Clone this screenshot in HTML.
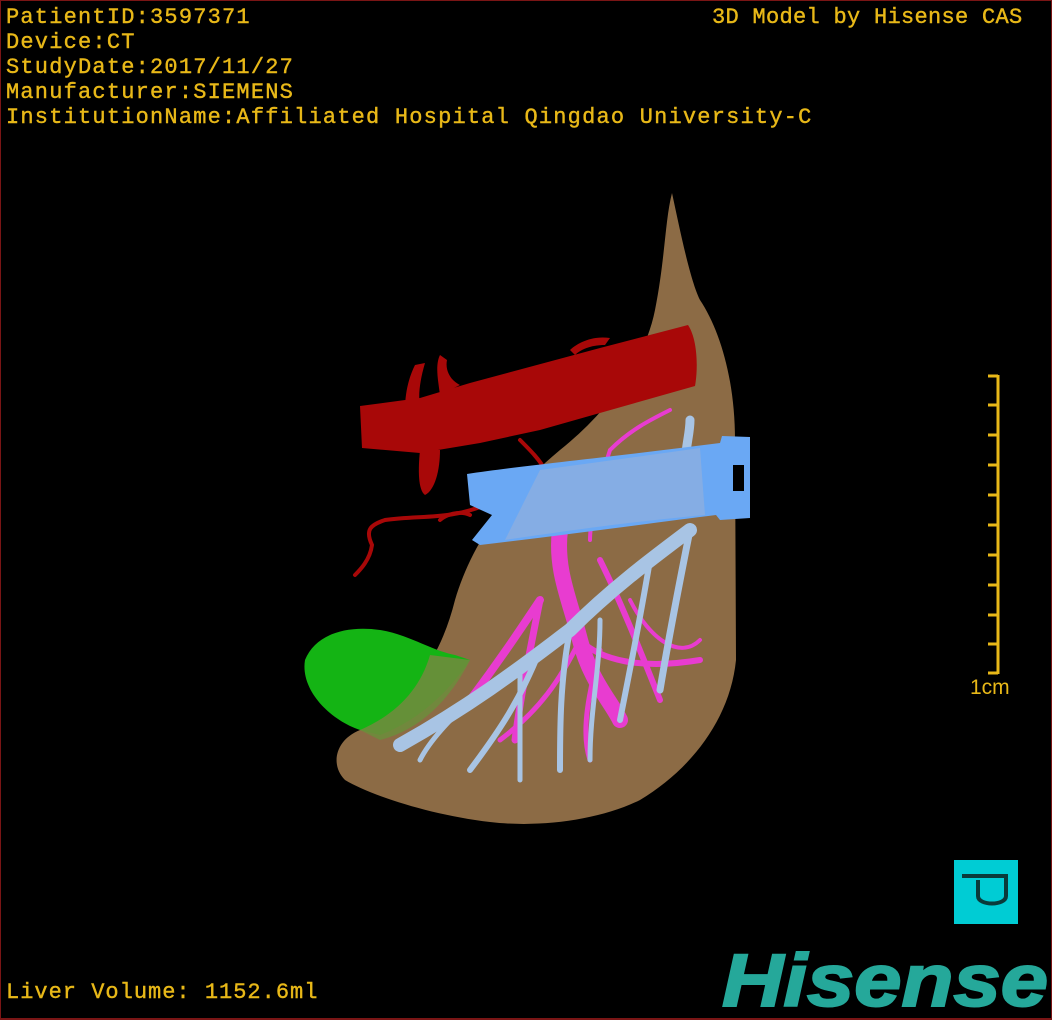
<!DOCTYPE html>
<html><head><meta charset="utf-8"><style>
html,body{margin:0;padding:0;background:#000;}
#f{position:relative;width:1052px;height:1020px;overflow:hidden;background:#000;box-sizing:border-box;border:1px solid #7a1515;border-bottom:2px solid #7a1515;}
.t{position:absolute;font-family:"Liberation Mono",monospace;font-size:22px;color:#e8b818;white-space:nowrap;line-height:25px;letter-spacing:1.2px;-webkit-text-stroke:0.4px #e8b818;}
</style></head><body><div id="f">
<div class="t" style="left:5px;top:4px">PatientID:3597371<br>Device:CT<br>StudyDate:2017/11/27<br>Manufacturer:SIEMENS<br>InstitutionName:Affiliated Hospital Qingdao University-C</div>
<div class="t" style="left:711px;top:4px;letter-spacing:0.3px">3D Model by Hisense CAS</div>
<div class="t" style="left:5px;top:979px;letter-spacing:1px">Liver Volume: 1152.6ml</div>
<svg width="1052" height="1020" style="position:absolute;left:-1px;top:-1px">
<g stroke="#e8b818" stroke-width="3">
<line x1="998" y1="375" x2="998" y2="674"/>
<line x1="988" y1="376" x2="998" y2="376"/><line x1="988" y1="405" x2="998" y2="405"/><line x1="988" y1="435" x2="998" y2="435"/><line x1="988" y1="465" x2="998" y2="465"/><line x1="988" y1="495" x2="998" y2="495"/><line x1="988" y1="525" x2="998" y2="525"/><line x1="988" y1="555" x2="998" y2="555"/><line x1="988" y1="585" x2="998" y2="585"/><line x1="988" y1="615" x2="998" y2="615"/><line x1="988" y1="644" x2="998" y2="644"/><line x1="988" y1="673" x2="998" y2="673"/>
</g>
<text x="970" y="694" font-family="Liberation Sans,sans-serif" font-size="21" fill="#e8b818">1cm</text>
<path d="M672,193 C680,230 690,280 700,300 C720,330 735,380 735,440 L736,660 C730,720 690,770 640,800 C600,820 540,828 490,822 C430,815 370,795 345,780 C330,765 335,740 360,730 C410,700 440,660 455,600 C470,550 500,500 560,450 C610,410 645,360 655,310 C665,260 665,220 672,193Z" fill="#8c6b45"/>
<path d="M305,660 C315,635 345,625 380,630 C410,635 430,650 455,655 L470,660 C450,690 420,720 380,735 L360,730 C330,720 300,690 305,660Z" fill="#14b414"/>
<path d="M430,655 L470,660 C450,700 420,730 380,740 L360,730 C395,715 420,690 430,655Z" fill="#6e8c3c" opacity="0.9"/>
<g stroke="#e83cd0" fill="none" stroke-linecap="round">
<path d="M560,530 C555,570 570,600 580,640 C590,680 610,700 620,720" stroke-width="16"/>
<path d="M540,600 C520,630 500,660 470,700" stroke-width="8"/>
<path d="M540,600 C530,650 520,700 515,740" stroke-width="7"/>
<path d="M580,640 C600,660 640,670 700,660" stroke-width="6"/>
<path d="M600,560 C620,600 640,650 660,700" stroke-width="6"/>
<path d="M610,450 C630,430 650,420 670,410" stroke-width="4"/>
<path d="M610,450 C600,480 590,520 590,540" stroke-width="4"/>
<path d="M600,650 C590,690 580,730 590,760" stroke-width="5"/>
<path d="M500,740 C540,710 560,680 580,640" stroke-width="5"/>
<path d="M630,600 C650,640 680,660 700,640" stroke-width="4"/>
</g>
<g stroke="#a8c4e4" fill="none" stroke-linecap="round">
<path d="M690,530 C650,560 610,590 570,630 C530,660 480,700 400,745" stroke-width="14"/>
<path d="M690,530 C680,580 670,630 660,690" stroke-width="7"/>
<path d="M650,560 C640,620 630,670 620,720" stroke-width="6"/>
<path d="M570,630 C560,680 560,730 560,770" stroke-width="6"/>
<path d="M540,650 C520,700 500,730 470,770" stroke-width="6"/>
<path d="M600,620 C600,670 590,710 590,760" stroke-width="5"/>
<path d="M520,670 C520,710 520,750 520,780" stroke-width="5"/>
<path d="M470,700 C450,720 430,740 420,760" stroke-width="5"/>
<path d="M690,420 C690,440 680,460 690,480" stroke-width="9"/>
</g>
<g fill="#a80808">
<path d="M360,406 L420,398 L470,383 L600,348 L688,325 C698,340 698,370 695,386 L540,430 L480,443 L420,453 L362,448Z"/>
<path d="M405,410 C405,390 410,375 415,365 L425,363 C420,380 418,395 420,405Z"/>
<path d="M440,395 C438,380 435,365 440,355 L447,360 C445,370 450,380 460,385Z"/>
<path d="M420,450 L440,450 C440,470 435,490 425,495 C418,490 418,470 420,450Z"/>
<path d="M570,350 C575,345 590,335 610,338 L605,345 C590,345 580,350 575,355Z"/>
</g>
<g stroke="#a80808" fill="none" stroke-width="4" stroke-linecap="round">
<path d="M485,505 C450,520 420,515 385,520 C370,525 365,530 372,545 C370,560 360,570 355,575"/>
<path d="M440,520 C445,515 460,510 470,515"/>
<path d="M520,440 C530,450 540,460 545,470"/>
</g>
<path d="M467,474 C520,466 600,458 680,448 L720,443 L722,436 L750,437 L750,518 L720,520 L716,515 C660,522 580,533 480,545 L472,540 L492,515 L470,505Z" fill="#6aa8f4"/>
<path d="M540,470 C600,462 650,455 700,448 L705,515 C650,520 600,526 505,540 C520,510 530,490 540,470Z" fill="#8aaee0" opacity="0.85"/>
<rect x="733" y="465" width="11" height="26" fill="#000"/>
<rect x="954" y="860" width="64" height="64" fill="#00ccd4"/>
<path d="M962,876 L1006,876 L1006,896 C1006,906 978,906 978,896 L978,880" fill="none" stroke="#0a3a3a" stroke-width="4"/>
<text x="722" y="1006" font-family="Liberation Sans,sans-serif" font-weight="bold" font-style="italic" font-size="74" fill="#25a89a" stroke="#25a89a" stroke-width="2" textLength="326" lengthAdjust="spacingAndGlyphs">Hisense</text>
</svg>
</div></body></html>
